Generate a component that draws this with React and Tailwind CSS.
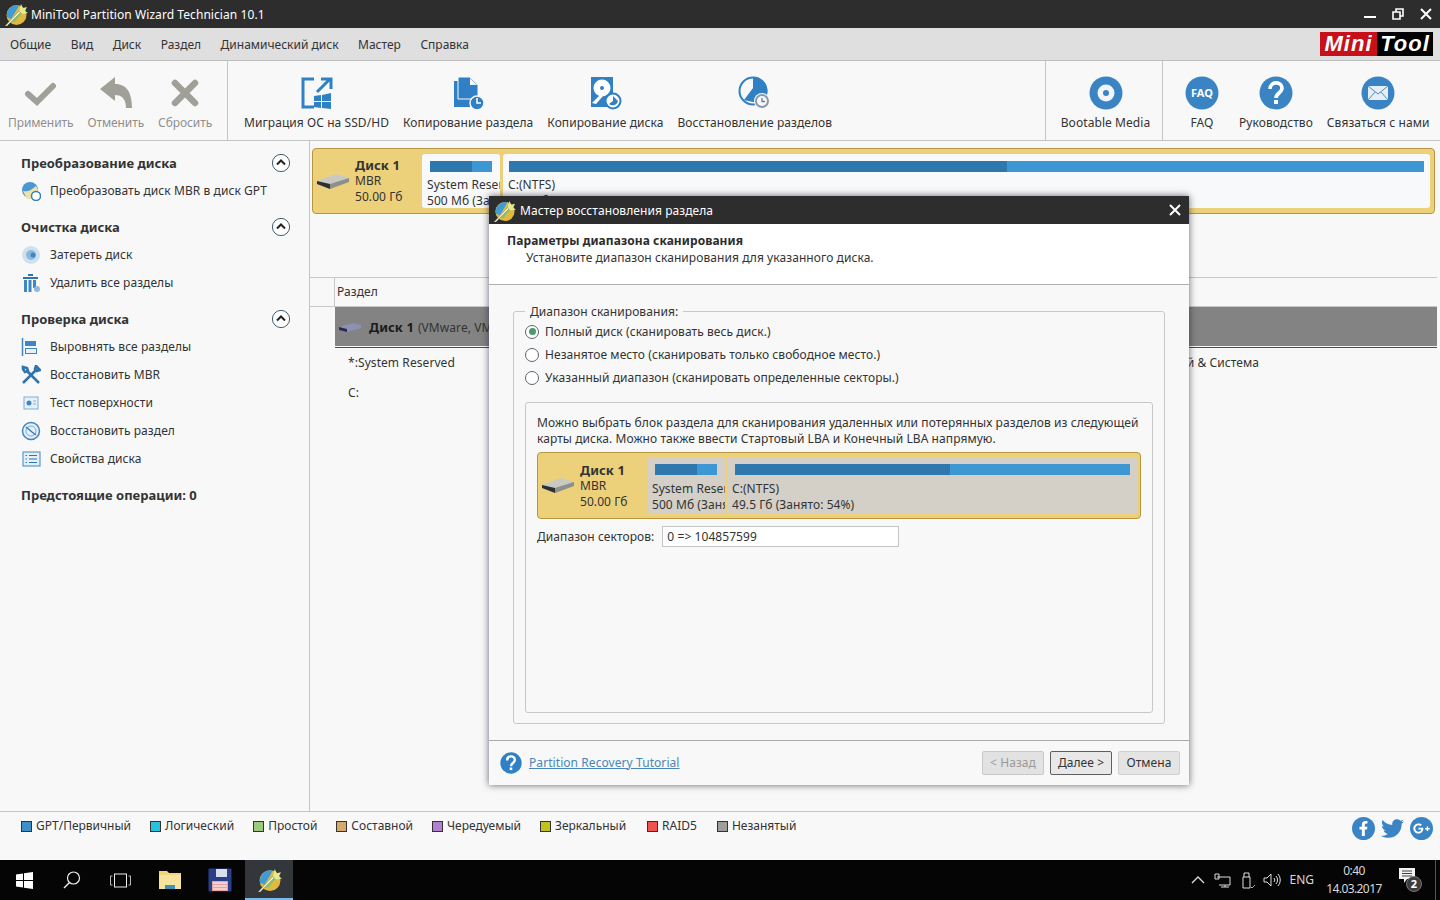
import { FaFacebookF, FaTwitter, FaGooglePlusG } from 'react-icons/fa';

const blue = '#2f80c4';

function AppLogo({ size = 24 }) {
  return (
    <svg width={size} height={size} viewBox="0 0 24 24">
      <circle cx="12.5" cy="13" r="10" fill="#e2b93f" />
      <path d="M3 15A10 10 0 0 1 15 3.4L12 9l-5 8z" fill="#3f9bd6" />
      <path d="M6 19l11-12 2 3-8 10z" fill="#8fbf6a" />
      <path d="M15 10l2-8 2 4 4-1-2 4 3 2-5 1z" fill="#e6ea8f" />
      <path d="M1 24L15 9l1.6 1.5L3 24z" fill="#f2f3de" stroke="#6d7f3a" strokeWidth="0.5" />
    </svg>
  );
}

function Drive({ className = '' }) {
  return (
    <svg className={className} width="34" height="17" viewBox="0 0 34 17">
      <path d="M1 8l19-7 13 4v4L14 16 1 11z" fill="#c9c9c4" />
      <path d="M1 8l13 3v5L1 11z" fill="#2f2f2f" />
      <path d="M14 11l19-6v4L14 16z" fill="#8f8f8a" />
    </svg>
  );
}

function ChevronCircle() {
  return (
    <svg className="-mt-[2px]" width="20" height="20" viewBox="0 0 20 20">
      <circle cx="10" cy="10" r="8.6" fill="#fff" stroke="#3f5f74" strokeWidth="1" />
      <path d="M6 11.5l4-4 4 4" fill="none" stroke="#222" strokeWidth="2" />
    </svg>
  );
}

const toolIcons = {
  apply: (
    <svg width="34" height="34" viewBox="0 0 34 34"><path d="M4 18l9 8L29 10" fill="none" stroke="#a09f98" strokeWidth="6" strokeLinecap="round" /></svg>
  ),
  undo: (
    <svg width="36" height="34" viewBox="0 0 36 34"><path d="M2 13L17 1v7c10 0 17 6 17 24h-6c0-9-4-13-11-13v6z" fill="#a09f98" /></svg>
  ),
  reset: (
    <svg width="34" height="34" viewBox="0 0 34 34"><path d="M7 7l20 20M27 7L7 27" fill="none" stroke="#a09f98" strokeWidth="6.5" strokeLinecap="round" /></svg>
  ),
  migrate: (
    <svg width="34" height="34" viewBox="0 0 34 34">
      <path d="M14 3H3v28h11M2 3" fill="none" stroke={blue} strokeWidth="3" />
      <path d="M17 16L29 4M21 3h10v10" fill="none" stroke={blue} strokeWidth="3" />
      <path d="M14 20l7-1v6h-7zM22 19l9-2v8h-9zM14 26h7v6l-7-1zM22 26h9v7l-9-1z" fill={blue} />
    </svg>
  ),
  copyPart: (
    <svg width="34" height="34" viewBox="0 0 34 34">
      <path d="M3 5v26h18V5z" fill={blue} />
      <path d="M7 1h12l8 8v14H7z" fill={blue} stroke="#f8f8f8" strokeWidth="1" />
      <path d="M19 2v7h7z" fill="#f8f8f8" />
      <circle cx="26" cy="27" r="7" fill={blue} stroke="#f8f8f8" strokeWidth="1.5" />
      <path d="M26 22v5h4" fill="none" stroke="#fff" strokeWidth="1.5" />
    </svg>
  ),
  copyDisk: (
    <svg width="34" height="34" viewBox="0 0 34 34">
      <rect x="3" y="1" width="22" height="30" fill={blue} />
      <circle cx="14" cy="12" r="8.5" fill="#fff" />
      <circle cx="14" cy="12" r="2" fill={blue} />
      <path d="M4 27l9-9 2 2-7 8z" fill="#fff" />
      <circle cx="25" cy="25" r="7.5" fill="#fff" stroke={blue} strokeWidth="2" />
      <path d="M25 20v5l-4 3a5.5 5.5 0 0 0 9-3z" fill={blue} />
    </svg>
  ),
  recover: (
    <svg width="34" height="34" viewBox="0 0 34 34">
      <circle cx="15" cy="15" r="13.5" fill="#f8f8f8" stroke={blue} strokeWidth="2" />
      <path d="M15 1a14 14 0 0 1 9 25H15L6 24 15 12z" fill={blue} />
      <circle cx="24" cy="25" r="8" fill="#f8f8f8" />
      <circle cx="24" cy="25" r="6" fill="none" stroke="#8a9aa8" strokeWidth="2" />
      <path d="M24 22v3.5h3" fill="none" stroke="#5a7e9c" strokeWidth="1.3" />
    </svg>
  ),
  bootable: (
    <svg width="34" height="34" viewBox="0 0 34 34">
      <circle cx="17" cy="17" r="16.5" fill="#3a84c4" />
      <circle cx="17" cy="17" r="8.5" fill="#f2f6fa" />
      <circle cx="17" cy="17" r="3" fill="#3a84c4" />
    </svg>
  ),
  help: (
    <svg width="34" height="34" viewBox="0 0 34 34">
      <circle cx="17" cy="17" r="16.5" fill="#3a84c4" />
      <path d="M11 13c0-8 12-8 12-1 0 5-6 5-6 10" fill="none" stroke="#fff" strokeWidth="3.6" />
      <rect x="15" y="24" width="4" height="4" fill="#fff" />
    </svg>
  ),
  mail: (
    <svg width="34" height="34" viewBox="0 0 34 34">
      <circle cx="17" cy="17" r="16.5" fill="#3a84c4" />
      <rect x="7" y="10" width="20" height="14" fill="#e6eef6" />
      <path d="M7 10l10 8 10-8M7 24l7-8M27 24l-7-8" fill="none" stroke="#3a84c4" strokeWidth="0.9" />
    </svg>
  ),
};

function ToolButton({ icon, label, disabled }) {
  return (
    <div className="flex flex-col items-center">
      <div className="h-[34px] flex items-center justify-center">{icon}</div>
      <div className={`mt-[5px] leading-[16px] whitespace-nowrap ${disabled ? 'text-[#8f8f8f] tracking-[-0.1px]' : 'text-[#333]'}`}>{label}</div>
    </div>
  );
}

const sideIcons = {
  convert: (
    <svg width="20" height="20" viewBox="0 0 20 20">
      <circle cx="9" cy="9" r="8" fill="#4a97d6" />
      <path d="M2 10c4 1 7 0 13-5l2 4-5 9H6z" fill="#f0e2a6" />
      <circle cx="15" cy="15" r="4.5" fill="#fff" stroke="#2f80c4" strokeWidth="1.5" />
    </svg>
  ),
  wipe: (
    <svg width="20" height="20" viewBox="0 0 20 20">
      <circle cx="10" cy="10" r="9" fill="#cfe1f0" />
      <circle cx="10" cy="10" r="5" fill="#8fb8da" />
      <circle cx="12" cy="10" r="2.5" fill="#3f86c4" />
    </svg>
  ),
  trash: (
    <svg width="20" height="20" viewBox="0 0 20 20">
      <path d="M2 4h15v2H2zM7 1h5v2H7z" fill="#2f74ae" />
      <path d="M3 7h3v12H3zM7.5 7h3v12h-3zM12 7h3v8h-3z" fill="#3f86c4" />
      <circle cx="16" cy="16" r="3" fill="#8fb8da" />
    </svg>
  ),
  align: (
    <svg width="20" height="20" viewBox="0 0 20 20">
      <path d="M1.5 1v18" stroke="#3f86c4" strokeWidth="1.5" />
      <rect x="4" y="4" width="11" height="5" fill="#3f86c4" />
      <rect x="4.5" y="11.5" width="11" height="5" fill="#e9f1f8" stroke="#3f86c4" />
    </svg>
  ),
  tools: (
    <svg width="20" height="20" viewBox="0 0 20 20">
      <path d="M2 18L15 5M15 1l4 4-3 1-2-2z" stroke="#2f74ae" strokeWidth="2.6" fill="none" />
      <path d="M18 18L6 6M2 2l4 1 1 3-3 1-2-3z" stroke="#2f74ae" strokeWidth="2.6" fill="none" />
    </svg>
  ),
  surface: (
    <svg width="20" height="20" viewBox="0 0 20 20">
      <rect x="3" y="4" width="14" height="12" fill="#e9f1f8" stroke="#7aaed6" />
      <circle cx="8" cy="10" r="2.5" fill="#3f86c4" />
      <path d="M12 8h3M12 11h3" stroke="#7aaed6" />
    </svg>
  ),
  restore: (
    <svg width="20" height="20" viewBox="0 0 20 20">
      <circle cx="10" cy="10" r="8.5" fill="#e4eff8" stroke="#3f86c4" strokeWidth="1.5" />
      <circle cx="10" cy="10" r="5" fill="none" stroke="#7aaed6" />
      <path d="M5 6l6 5 4 3" stroke="#2f74ae" strokeWidth="1.2" fill="none" />
    </svg>
  ),
  props: (
    <svg width="20" height="20" viewBox="0 0 20 20">
      <rect x="2" y="3" width="17" height="14" fill="#e4eff8" stroke="#3f86c4" />
      <path d="M4.5 6.5h1.5M8 6.5h8M4.5 10h1.5M8 10h8M4.5 13.5h1.5M8 13.5h8" stroke="#2f74ae" strokeWidth="1.2" />
    </svg>
  ),
};

const sideSections = [
  { title: 'Преобразование диска', items: [{ icon: 'convert', label: 'Преобразовать диск MBR в диск GPT' }] },
  { title: 'Очистка диска', items: [{ icon: 'wipe', label: 'Затереть диск' }, { icon: 'trash', label: 'Удалить все разделы' }] },
  {
    title: 'Проверка диска',
    items: [
      { icon: 'align', label: 'Выровнять все разделы' },
      { icon: 'tools', label: 'Восстановить MBR' },
      { icon: 'surface', label: 'Тест поверхности' },
      { icon: 'restore', label: 'Восстановить раздел' },
      { icon: 'props', label: 'Свойства диска' },
    ],
  },
];

function Sidebar() {
  return (
    <aside className="w-[310px] shrink-0 border-r border-[#c4c4c4] pt-[12px] pl-[21px] pr-[18px]">
      {sideSections.map((s) => (
        <div key={s.title} className="mb-[12px]">
          <div className="flex items-center justify-between h-[22px]">
            <span className="font-bold text-[13px] text-[#333] tracking-normal">{s.title}</span>
            <ChevronCircle />
          </div>
          <div className="mt-[2px]">
            {s.items.map((it) => (
              <div key={it.label} className="flex items-center h-[28px] text-[#333]">
                <span className="w-[29px] flex">{sideIcons[it.icon]}</span>
                <span>{it.label}</span>
              </div>
            ))}
          </div>
        </div>
      ))}
      <div className="font-bold text-[13px] text-[#333] tracking-normal mt-[13px]">Предстоящие операции: 0</div>
    </aside>
  );
}

function PartBox({ className, barClass, nameClass, dark, name, size }) {
  return (
    <div className={`h-full rounded-[3px] pt-[7px] overflow-hidden ${className}`}>
      <div className={`flex h-[11px] ${barClass}`}>
        <div className="bg-[#2e78ad]" style={{ width: `${dark}%` }} />
        <div className="flex-1 bg-[#3d97d3]" />
      </div>
      <div className={`pl-[5px] leading-[16px] whitespace-nowrap text-[#333] ${nameClass}`}>{name}</div>
      <div className="pl-[5px] leading-[16px] whitespace-nowrap text-[#333]">{size}</div>
    </div>
  );
}

function DiskLabel({ width }) {
  return (
    <div className={`${width} shrink-0 flex items-center relative`}>
      <Drive className="ml-[3px]" />
      <div className="ml-[5px] leading-[16px] text-[#333]">
        <div className="font-bold text-[13px]">Диск 1</div>
        <div>MBR</div>
        <div>50.00 Гб</div>
      </div>
    </div>
  );
}

function Legend({ color, label, className = '' }) {
  return (
    <div className={`flex items-center gap-[1px] text-[#333] tracking-normal ${className}`}>
      <span className={`w-[11px] h-[11px] mr-[3px] border border-[#333] ${color}`} />
      <span>{label}</span>
    </div>
  );
}

function Radio({ checked, label }) {
  return (
    <label className="flex items-center h-[23px] text-[#333]">
      <span className="w-[14px] h-[14px] rounded-full border border-[#5c6670] bg-white flex items-center justify-center mr-[6px]">
        {checked && <span className="w-[7px] h-[7px] rounded-full bg-[#4a9a6a]" />}
      </span>
      {label}
    </label>
  );
}

function Wizard() {
  return (
    <div className="absolute left-[489px] top-[196px] w-[700px] h-[589px] bg-[#f8f8f8] flex flex-col shadow-[0_0_7px_rgba(20,20,40,0.65)] z-10">
      <div className="h-[28px] bg-[#2d2d2d] text-white flex items-center pl-[4px] pr-[7px] shrink-0">
        <AppLogo size={23} />
        <span className="ml-[4px] mt-[1px]">Мастер восстановления раздела</span>
        <svg className="ml-auto" width="14" height="14" viewBox="0 0 14 14"><path d="M2 2l10 10M12 2L2 12" stroke="#fff" strokeWidth="2" /></svg>
      </div>
      <div className="h-[61px] bg-white border-b border-[#b0b0b0] shrink-0 pt-[9px] pl-[18px] leading-[16px] text-[#333]">
        <div className="font-bold text-[#2c2c2c]">Параметры диапазона сканирования</div>
        <div className="pl-[19px] mt-[1px]">Установите диапазон сканирования для указанного диска.</div>
      </div>
      <div className="flex-1 px-[24px] pt-[18px] pb-[16px]">
        <fieldset className="h-full border border-[#c8c8c8] rounded-[3px] px-[11px] pb-[10px]">
          <legend className="relative top-[1px] px-[5px] leading-[16px] text-[#333]">Диапазон сканирования:</legend>
          <div className="mt-[1px]">
            <Radio checked label="Полный диск (сканировать весь диск.)" />
            <Radio label="Незанятое место (сканировать только свободное место.)" />
            <Radio label="Указанный диапазон (сканировать определенные секторы.)" />
          </div>
          <div className="mt-[13px] h-[311px] border border-[#c8c8c8] rounded-[3px] px-[11px] pt-[12px]">
            <p className="leading-[16px] text-[#333]">
              Можно выбрать блок раздела для сканирования удаленных или потерянных разделов из следующей карты диска. Можно также ввести Стартовый LBA и Конечный LBA напрямую.
            </p>
            <div className="mt-[5px] h-[67px] w-[604px] bg-[#edd17a] border border-[#b8963f] rounded-[4px] flex pr-[2px] py-[4px]">
              <DiskLabel width="w-[109px]" />
              <PartBox className="w-[78px] bg-[#d4d0c8]" barClass="mx-[8px]" nameClass="mt-[6px]" dark={67} name="System Reserved" size="500 Мб (Занято: 31%)" />
              <PartBox className="flex-1 ml-[2px] bg-[#d4d0c8]" barClass="mx-[8px]" nameClass="mt-[6px]" dark={54.4} name="C:(NTFS)" size="49.5 Гб (Занято: 54%)" />
            </div>
            <div className="mt-[7px] flex items-center text-[#333]">
              <span>Диапазон секторов:</span>
              <div className="ml-[8px] w-[237px] h-[21px] bg-white border border-[#c4c4c4] pl-[4px] flex items-center">0 =&gt; 104857599</div>
            </div>
          </div>
        </fieldset>
      </div>
      <div className="h-[45px] border-t border-[#a8a8a8] shrink-0 flex items-center pl-[11px] pr-[9px]">
        <svg width="22" height="22" viewBox="0 0 34 34">
          <circle cx="17" cy="17" r="16.5" fill="#2f80c4" />
          <path d="M11 13c0-8 12-8 12-1 0 5-6 5-6 10" fill="none" stroke="#fff" strokeWidth="3.6" />
          <rect x="15" y="24" width="4" height="4" fill="#fff" />
        </svg>
        <a className="ml-[7px] text-[#4a86b8] underline -mt-[1px]">Partition Recovery Tutorial</a>
        <div className="ml-auto flex gap-[6px]">
          <button className="w-[62px] h-[24px] bg-[#e2e2e2] border border-[#c8c8c8] rounded-[2px] text-[#9a9a9a]">&lt; Назад</button>
          <button className="w-[62px] h-[24px] bg-[#e8e8e8] border border-[#5e5e5e] rounded-[2px] text-[#333]">Далее &gt;</button>
          <button className="w-[62px] h-[24px] bg-[#e4e4e4] border border-[#cfcfcf] rounded-[2px] text-[#333]">Отмена</button>
        </div>
      </div>
    </div>
  );
}

function Taskbar() {
  return (
    <div className="h-[40px] bg-[#050505] text-[#e6e6e6] flex items-stretch shrink-0">
      <div className="w-[48px] flex items-center justify-center">
        <svg width="17" height="17" viewBox="0 0 17 17"><path d="M0 2.4l7-1v6.6H0zM8 1.2L17 0v8H8zM0 9h7v6.6l-7-1zM8 9h9v8l-9-1.2z" fill="#fff" /></svg>
      </div>
      <div className="w-[48px] flex items-center justify-center">
        <svg width="18" height="18" viewBox="0 0 18 18"><circle cx="10.5" cy="7" r="6" fill="none" stroke="#eee" strokeWidth="1.2" /><path d="M6.5 11.5L1 17" stroke="#eee" strokeWidth="1.4" /></svg>
      </div>
      <div className="w-[48px] flex items-center justify-center">
        <svg width="21" height="15" viewBox="0 0 21 15"><rect x="4.5" y="1" width="12" height="13" fill="none" stroke="#eee" /><path d="M2.5 3H.5v9h2M18.5 3h2v9h-2" fill="none" stroke="#bbb" /></svg>
      </div>
      <div className="w-[52px] flex items-center justify-center">
        <svg width="22" height="20" viewBox="0 0 22 20"><path d="M0 1h8l2 2h12v16H0z" fill="#f0d77f" /><path d="M0 5h22v14H0z" fill="#f6e39c" /><path d="M6 15h10v4H6z" fill="#3f92b8" /></svg>
      </div>
      <div className="w-[48px] flex items-center justify-center">
        <svg width="24" height="24" viewBox="0 0 24 24"><rect x="0.5" y="0.5" width="23" height="23" rx="1" fill="#28408c" /><rect x="8" y="1" width="11" height="8" fill="#d9deea" /><rect x="4" y="13" width="16" height="10" fill="#eba0a0" /><path d="M5 15h14M5 18h14M5 21h14" stroke="#fff" /></svg>
      </div>
      <div className="ml-[1px] w-[48px] bg-[#33373b] border-b-[2px] border-[#76b9ed] flex items-center justify-center">
        <AppLogo size={25} />
      </div>
      <div className="ml-auto flex items-center text-[#d8d8d8]">
        <svg width="14" height="8" viewBox="0 0 14 8" className="mr-[9px]"><path d="M1 7l6-6 6 6" fill="none" stroke="#ddd" strokeWidth="1.3" /></svg>
        <svg width="17" height="15" viewBox="0 0 17 15" className="mr-[10px]"><path d="M3 4h13v8H5M7 14h8M11 12v2M1 1h4v5H1z" fill="none" stroke="#ddd" /></svg>
        <svg width="14" height="17" viewBox="0 0 14 17" className="mr-[8px]"><path d="M2 5h7v11H2zM3 5V1h5v4" fill="none" stroke="#ddd" /><path d="M10 15l1 1 3-3" stroke="#aaa" fill="none" /></svg>
        <svg width="18" height="14" viewBox="0 0 18 14" className="mr-[8px]"><path d="M1 5h3l4-4v12L4 9H1zM11 5a3 3 0 0 1 0 4M13 3a6 6 0 0 1 0 8M15 1a9 9 0 0 1 0 12" fill="none" stroke="#ddd" /></svg>
        <span className="tracking-normal">ENG</span>
        <div className="ml-[7px] w-[66px] text-center leading-[18px] tracking-[-0.6px]">
          <div>0:40</div>
          <div>14.03.2017</div>
        </div>
        <div className="relative ml-[12px] w-[24px] h-[24px]">
          <svg width="16" height="15" viewBox="0 0 16 15" className="absolute left-0 top-0"><path d="M0 0h16v11h-8l-3 4v-4H0z" fill="#f2f2f2" /><path d="M3 3h10M3 5.5h10M3 8h10" stroke="#444" /></svg>
          <span className="absolute left-[7px] top-[8px] w-[16px] h-[16px] rounded-full bg-[#3c3c3c] border border-[#777] text-white text-[11px] font-bold flex items-center justify-center">2</span>
        </div>
        <div className="ml-[12px] mr-[4px] w-[1px] h-full bg-[#555]" />
      </div>
    </div>
  );
}

export default function App() {
  return (
    <div className="relative w-[1440px] h-[900px] overflow-hidden flex flex-col bg-[#f8f8f8] text-[12px] tracking-[0.07px] font-['Noto_Sans','Liberation_Sans',sans-serif]">
      <div className="h-[28px] bg-[#2d2d2d] text-white flex items-center pl-[4px] shrink-0">
        <AppLogo size={24} />
        <span className="ml-[3px] mt-[2px]">MiniTool Partition Wizard Technician 10.1</span>
        <div className="ml-auto flex items-center gap-[16px] pr-[8px]">
          <svg width="12" height="14" viewBox="0 0 12 14"><path d="M0 10h12" stroke="#fff" strokeWidth="2" /></svg>
          <svg width="12" height="12" viewBox="0 0 12 12"><path d="M1 4h7v7H1zM4 4V1h7v7H8" fill="none" stroke="#fff" strokeWidth="1.6" /></svg>
          <svg width="12" height="12" viewBox="0 0 12 12"><path d="M1 1l10 10M11 1L1 11" stroke="#fff" strokeWidth="2" /></svg>
        </div>
      </div>

      <div className="h-[33px] bg-[#dfdfdf] border-b border-[#bdbdbd] flex items-center shrink-0 pl-[10px] pr-[7px] text-[#333] gap-[19.5px] tracking-normal">
        {['Общие', 'Вид', 'Диск', 'Раздел', 'Динамический диск', 'Мастер', 'Справка'].map((m) => (
          <span key={m} className="mt-[2px]">{m}</span>
        ))}
        <div className="ml-auto flex h-[24px] w-[113px] italic font-bold text-[22px] tracking-[1px] text-white font-['Liberation_Sans',sans-serif] leading-[24px] text-center">
          <span className="w-[57px] bg-[#c8101a]">Mini</span>
          <span className="flex-1 bg-black">Tool</span>
        </div>
      </div>

      <div className="h-[80px] border-b border-[#c4c4c4] flex shrink-0 bg-[#f8f8f8]">
        <div className="w-[228px] border-r border-[#c4c4c4] pl-[8px] pt-[15px] flex gap-[14px]">
          <ToolButton icon={toolIcons.apply} label="Применить" disabled />
          <ToolButton icon={toolIcons.undo} label="Отменить" disabled />
          <ToolButton icon={toolIcons.reset} label="Сбросить" disabled />
        </div>
        <div className="flex-1 pl-[16px] pt-[15px] flex gap-[14px]">
          <ToolButton icon={toolIcons.migrate} label="Миграция ОС на SSD/HD" />
          <ToolButton icon={toolIcons.copyPart} label="Копирование раздела" />
          <ToolButton icon={toolIcons.copyDisk} label="Копирование диска" />
          <ToolButton icon={toolIcons.recover} label="Восстановление разделов" />
        </div>
        <div className="w-[118px] border-x border-[#c4c4c4] pt-[15px] pl-[3px] flex justify-center">
          <ToolButton icon={toolIcons.bootable} label="Bootable Media" />
        </div>
        <div className="w-[277px] pt-[15px] pl-[22px] flex gap-[14px]">
          <div className="w-[34px] mr-[6px]">
            <div className="relative h-[34px] w-[34px]">
              <svg width="34" height="34" viewBox="0 0 34 34"><circle cx="17" cy="17" r="16.5" fill="#3a84c4" /></svg>
              <span className="absolute inset-0 flex items-center justify-center text-white font-bold text-[11px]">FAQ</span>
            </div>
            <div className="mt-[5px] leading-[16px] text-center text-[#333]">FAQ</div>
          </div>
          <ToolButton icon={toolIcons.help} label="Руководство" />
          <ToolButton icon={toolIcons.mail} label="Связаться с нами" />
        </div>
      </div>

      <div className="flex-1 flex min-h-0">
        <Sidebar />
        <div className="flex-1 min-w-0 flex flex-col pt-[7px]">
          <div className="ml-[2px] mr-[5px] h-[66px] bg-[#edd17a] border border-[#b8963f] rounded-[4px] flex pr-[4px] py-[5px] shrink-0">
            <DiskLabel width="w-[109px]" />
            <PartBox className="w-[78px] bg-[#f8f9fa]" barClass="mx-[8px]" nameClass="mt-[5px]" dark={68} name="System Reserved" size="500 Мб (Занято: 31%)" />
            <PartBox className="flex-1 ml-[3px] bg-[#f8f9fa]" barClass="mx-[6px]" nameClass="mt-[5px]" dark={54.4} name="C:(NTFS)" size="49.5 Гб (Занято: 54%)" />
          </div>
          <div className="mt-[63px] h-[30px] border-y border-[#c8c8c8] mr-[3px] flex items-center shrink-0">
            <div className="w-[25px] h-full border-r border-[#c8c8c8]" />
            <span className="pl-[2px] text-[#333]">Раздел</span>
          </div>
          <div className="ml-[25px] mr-[3px] h-[41px] border-b border-[#44505a] pb-[1px] shrink-0">
            <div className="h-full bg-[#838383] flex items-center">
              <svg width="24" height="12" viewBox="0 0 24 12" className="ml-[3px]"><path d="M1 6l14-4 8 2v3L9 11 1 9z" fill="#8f8fb0" /><path d="M1 6l8 2v3L1 9z" fill="#2a2a50" /></svg>
              <span className="ml-[7px] mt-[2px] font-bold text-[13px] text-[#1a1a1a]">Диск 1</span>
              <span className="ml-[4px] mt-[2px] text-[#333] whitespace-nowrap">(VMware, VMware Virtual S SAS, MBR, 50.00 Гб)</span>
            </div>
          </div>
          <div className="ml-[38px] h-[30px] flex items-center text-[#333] shrink-0">
            <span>*:System Reserved</span>
            <span className="ml-[681px] whitespace-nowrap">Активный &amp; Система</span>
          </div>
          <div className="ml-[38px] h-[30px] flex items-center text-[#333] shrink-0">C:</div>
        </div>
      </div>

      <div className="h-[49px] border-t border-[#c4c4c4] bg-[#f8f8f8] shrink-0 flex items-start pt-[5px] pl-[21px] pr-[7px] gap-[19px]">
        <Legend color="bg-[#3d8ec9]" label="GPT/Первичный" />
        <Legend color="bg-[#26c4dc]" label="Логический" />
        <Legend color="bg-[#9cc97e]" label="Простой" />
        <Legend color="bg-[#d6aa6a]" label="Составной" />
        <Legend color="bg-[#b37fd1]" label="Чередуемый" />
        <Legend color="bg-[#c2c21c]" label="Зеркальный" />
        <Legend color="bg-[#ef5350]" label="RAID5" className="ml-[2px]" />
        <Legend color="bg-[#9e9e9e]" label="Незанятый" className="ml-[1px]" />
        <div className="ml-auto flex gap-[6px] text-white">
          <span className="w-[23px] h-[23px] rounded-full bg-[#3a84c4] flex items-center justify-center text-[15px]"><FaFacebookF /></span>
          <span className="w-[23px] h-[23px] flex items-center justify-center text-[23px] text-[#3a84c4]"><FaTwitter /></span>
          <span className="w-[23px] h-[23px] rounded-full bg-[#3a84c4] flex items-center justify-center text-[17px]"><FaGooglePlusG /></span>
        </div>
      </div>

      <Taskbar />
      <Wizard />
    </div>
  );
}
